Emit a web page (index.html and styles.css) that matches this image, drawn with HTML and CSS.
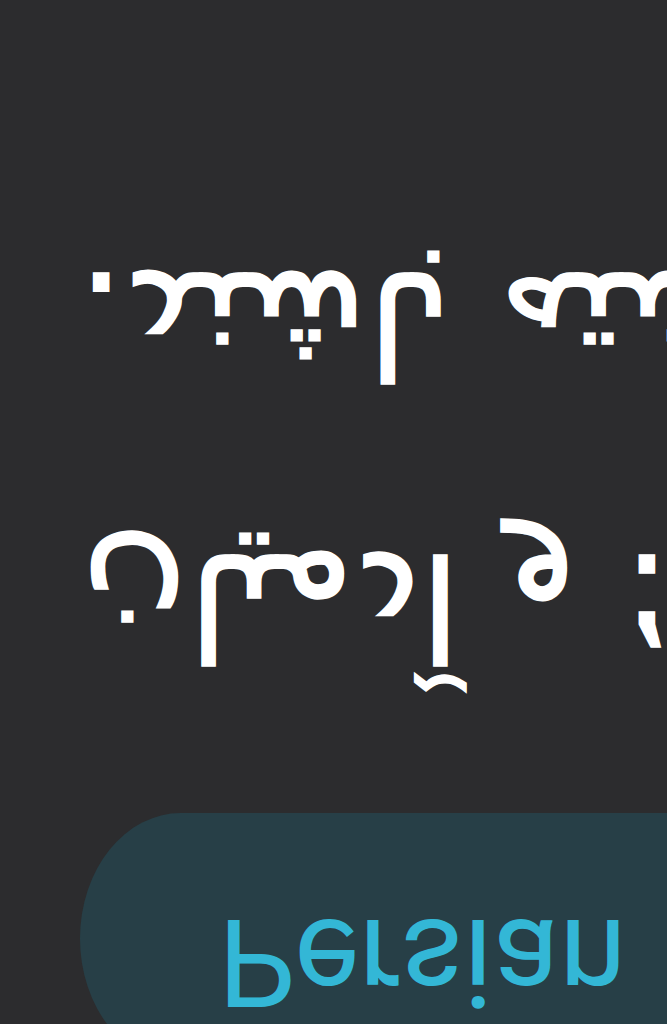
FILE: index.html
```html
<!doctype html>
<html lang="en">
<head>
	<meta charset="UTF-8">
	<title>Persian</title>

	<link rel="stylesheet" href="styles.css">
</head>
<body>

	<div class="screen">
		<!-- language chip -->
		<div class="chip">
			<span class="chip-label">Persian</span>
		</div>

		<!-- translated text -->
		<div class="translation">
			<p class="line line-first"><span dir="rtl" lang="fa">همه انسان‌ها حق زندگی دارند؛ و آدمیان</span></p>
			<p class="line line-last"><span dir="rtl" lang="fa">باید حقوق برابر داشته باشند.</span></p>
		</div>
	</div>

</body>
</html>
```

FILE: styles.css
```css
* {margin: 0; padding: 0; box-sizing: border-box;}
html, body {width: 667px; height: 1024px; overflow: hidden; background: #2c2c2e;}

/* the capture is mirrored top to bottom */
.screen {width: 667px; height: 1024px; overflow: hidden; transform: scaleY(-1);}

.chip {width: 900px; height: 251px; margin: -40px 0 0 80px; padding: 42px 0 0 138px; background: #273f47; border-radius: 110px 0 0 110px / 137px 0 0 137px;}
.chip-label {display: block; font: normal 122px/1 Roboto, "Liberation Sans", sans-serif; color: #33b7d6;}

.translation {margin-top: 71px; color: #fff; font: normal 146px/273px "DejaVu Sans", sans-serif; -webkit-text-stroke: 1.5px #fff;}
.translation .line {white-space: nowrap; height: 273px;}
.translation .line span {display: inline-block;}
.translation .line-first {height: 282px; padding-left: 81px;}
.translation .line-last {padding-left: 78px;}
```
